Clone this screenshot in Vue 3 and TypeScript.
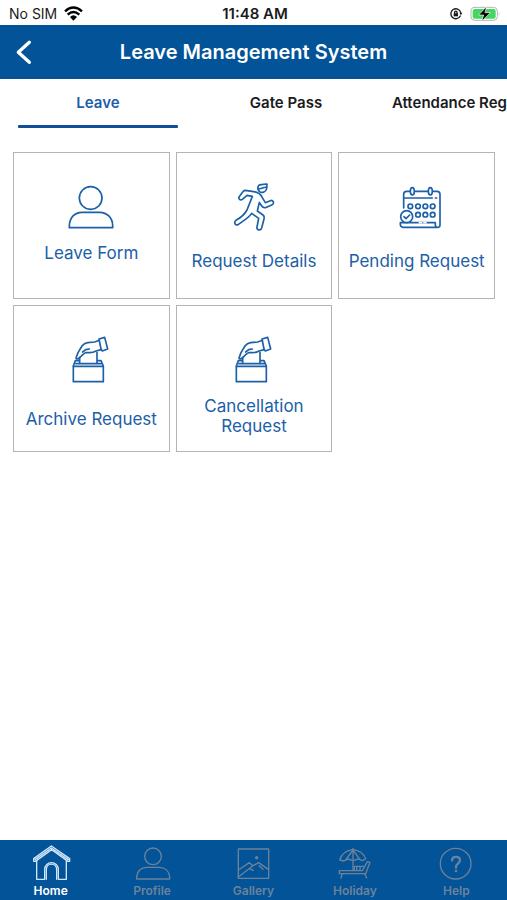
<script setup lang="ts">
import { ref } from 'vue'

type IconName = 'person' | 'runner' | 'calendar' | 'ballot'

interface Tile {
  label: string
  icon: IconName
  spacing: 'close' | 'medium' | 'wide'
}

const tabs: string[] = ['Leave', 'Gate Pass', 'Attendance Reg']
const activeTab = ref(0)

const tiles: Tile[] = [
  { label: 'Leave Form', icon: 'person', spacing: 'close' },
  { label: 'Request Details', icon: 'runner', spacing: 'medium' },
  { label: 'Pending Request', icon: 'calendar', spacing: 'medium' },
  { label: 'Archive Request', icon: 'ballot', spacing: 'wide' },
  { label: 'Cancellation Request', icon: 'ballot', spacing: 'close' },
]

const navItems: string[] = ['Home', 'Profile', 'Gallery', 'Holiday', 'Help']
const activeNav = ref('Home')
</script>

<template>
  <div class="screen">
    <div class="status">
      <div class="carrier">
        <span>No SIM</span>
        <svg class="wifi" viewBox="0 0 57 45" aria-hidden="true">
          <path d="M3 16 Q28 -7 54 16" />
          <path d="M11 26 Q28 10 46 26" />
          <path class="solid" d="M18 33 Q28 23 39 33 L28 44Z" />
        </svg>
      </div>
      <time class="clock">11:48 AM</time>
      <div class="indicators">
        <svg class="lock" viewBox="0 0 42 42" aria-hidden="true">
          <path d="M34 27 A15 15 0 1 1 35 16" />
          <path class="solid" d="M31 17 H40 L36 25Z" />
          <path class="solid" d="M14 19 H27 V28 H14Z" />
          <path d="M17 20 V16 A3 3 0 0 1 24 16 V20" />
        </svg>
        <svg class="battery" viewBox="0 0 93 48" aria-hidden="true">
          <rect class="shell" x="3" y="4" width="79" height="39" rx="11" />
          <rect class="charge" x="8" y="9" width="69" height="29" rx="6" />
          <path class="cap" d="M86 18 Q91 23 86 29Z" />
          <path class="bolt" d="M49 2 L26 27 H41 L35 46 L61 20 H46Z" />
        </svg>
      </div>
    </div>

    <header class="topbar">
      <button class="back" type="button" aria-label="Back">
        <svg viewBox="0 0 72 84" aria-hidden="true"><path d="M52 13 L19 43 L52 73" /></svg>
      </button>
      <h1>Leave Management System</h1>
    </header>

    <nav class="tabs">
      <button
        v-for="(tab, i) in tabs"
        :key="tab"
        type="button"
        class="tab"
        :class="{ active: i === activeTab }"
        @click="activeTab = i"
      >
        {{ tab }}
      </button>
    </nav>

    <main class="tiles">
      <button v-for="tile in tiles" :key="tile.label" type="button" class="tile" :class="tile.spacing">
        <svg v-if="tile.icon === 'person'" class="tile-icon" viewBox="197 111 150 150" aria-hidden="true">
          <circle cx="271" cy="159" r="34" />
          <path d="M207 248 V241 C209 215 224 203 246 202 H298 C320 203 336 217 337 241 V248Z" />
        </svg>
        <svg v-else-if="tile.icon === 'runner'" class="tile-icon" viewBox="177 111 150 150" aria-hidden="true">
          <path d="M264 126 C265 118 272 118 279 118 L291 117 L290 131 C287 143 276 144 269 140 C265 137 263 132 264 126Z" />
          <path d="M266 131 C275 133 280 125 289 127" />
          <path d="M226 136 L251 140 C265 142 273 149 277 158 L286 173 L301 167 C309 164 314 174 307 179 L286 188 C280 189 276 185 273 180 L268 172 L262 198 L279 210 C283 213 283 217 282 222 L275 249 C272 258 259 256 261 246 L266 220 L245 205 C237 218 219 228 204 239 C195 243 191 231 198 226 C216 216 224 208 231 195 L247 154 L231 151 L217 163 C210 168 203 160 209 153 L220 139 Q222 136 226 136Z" />
        </svg>
        <svg v-else-if="tile.icon === 'calendar'" class="tile-icon" viewBox="169 111 150 150" aria-hidden="true">
          <path d="M204 189 V148 Q204 139 213 139 H223 M237 139 H277 M291 139 H304 Q313 139 313 148 V240 Q313 247 306 247 H203 Q194 247 194 238 V233 H299 V239 Q299 247 306 247" />
          <ellipse cx="230" cy="139" rx="6" ry="11" />
          <ellipse cx="284" cy="139" rx="6" ry="11" />
          <path d="M205 159 H290 M299 159 H303" />
          <circle cx="224" cy="184" r="7" />
          <circle cx="247" cy="184" r="7" />
          <circle cx="269" cy="184" r="7" />
          <circle cx="291" cy="184" r="7" />
          <circle cx="247" cy="209" r="7" />
          <circle cx="269" cy="209" r="7" />
          <circle cx="291" cy="209" r="7" />
          <circle class="filled" cx="213" cy="215" r="18" />
          <path d="M205 215 L211 221 L222 210" />
          <path class="gap" d="M251 233 H258 M265 233 H271" />
        </svg>
        <svg v-else class="tile-icon" viewBox="199 105 150 150" aria-hidden="true">
          <path d="M221 199 H311 V245 H221Z" />
          <path d="M221 198 L227 182 H238 M294 182 H304 L311 198 M229 191 H304" />
          <path d="M240 190 V172 M292 190 V157" />
          <path d="M299 121 L285 126 L264 128 C256 129 252 131 247 138 L235 158 L229 174 C230 178 235 177 239 174 L250 163 L258 158 H270 C278 158 284 156 289 153 L304 149" />
          <path d="M249 156 L258 149 L269 147" />
          <path d="M298 117 L315 112 L324 147 L308 153 L304 147Z" />
        </svg>
        <span class="tile-label">{{ tile.label }}</span>
      </button>
    </main>

    <footer class="bottom">
      <a
        v-for="item in navItems"
        :key="item"
        href="#"
        class="nav-item"
        :class="{ active: item === activeNav }"
        @click.prevent="activeNav = item"
      >
        <svg v-if="item === 'Home'" class="nav-icon" viewBox="93 40 120 120" aria-hidden="true">
          <path d="M101 87 L154 49 L209 87 V95 H204 L155 60 L106 95 H101Z" />
          <path d="M105 90 L154 55 L205 90" />
          <path d="M110 93 V149 H134 V120 C134 92 175 92 175 120 V149 H199 V93" />
          <path d="M139 149 V120 C139 98 170 98 170 120 V149" />
        </svg>
        <svg v-else-if="item === 'Profile'" class="nav-icon" viewBox="396 40 120 120" aria-hidden="true">
          <circle cx="459" cy="80" r="25" />
          <path d="M410 148 V142 C412 123 424 114 440 113 H479 C496 114 508 125 509 142 V148Z" />
        </svg>
        <svg v-else-if="item === 'Gallery'" class="nav-icon" viewBox="100 40 120 120" aria-hidden="true">
          <rect x="116" y="58" width="91" height="88" />
          <circle class="dot" cx="171" cy="84" r="5" />
          <path d="M116 121 L149 99 L160 108 M116 142 L160 108 L177 99 L207 120 M149 117 L161 122 M179 108 L190 119" />
        </svg>
        <svg v-else-if="item === 'Holiday'" class="nav-icon" viewBox="405 40 120 120" aria-hidden="true">
          <path d="M419 91 C425 72 440 62 459 60 C478 62 492 73 497 88 L487 93 L475 88 L459 93 L444 88 L432 94Z" />
          <path d="M459 56 V122 M459 61 L437 91 M459 61 L480 90" />
          <path d="M418 123 H487 L502 96 L510 98 L497 132 H418Z" />
          <path d="M427 132 L423 145 M494 132 L500 145 M463 122 V110 H490 M470 110 V121 M480 110 V121" />
        </svg>
        <svg v-else class="nav-icon" viewBox="169 40 120 120" aria-hidden="true">
          <circle cx="228" cy="102" r="46" />
          <path class="heavy" d="M217 92 C218 78 241 79 241 92 C241 101 229 101 229 112 V114" />
          <circle class="dot" cx="229" cy="124" r="4" />
        </svg>
        <span>{{ item }}</span>
      </a>
    </footer>
  </div>
</template>

<style>
body {
  margin: 0;
  background: #fff;
}
</style>

<style scoped>
.screen {
  display: flex;
  flex-direction: column;
  min-height: 100vh;
  overflow: hidden;
  background: #fff;
  color: #1b1b1d;
  font-family: Inter, "Liberation Sans", sans-serif;
}

button {
  margin: 0;
  padding: 0;
  border: 0;
  background: none;
  color: inherit;
  font: inherit;
  cursor: pointer;
}

svg {
  display: block;
  fill: none;
  stroke: currentColor;
  stroke-linecap: round;
  stroke-linejoin: round;
}

.status {
  display: grid;
  grid-template-columns: 1fr auto 1fr;
  align-items: center;
  height: 25px;
  padding: 2px 6px 0 9px;
  box-sizing: border-box;
  font-size: 14px;
  line-height: 20px;
}

.carrier,
.indicators {
  display: flex;
  align-items: center;
  gap: 7px;
}

.indicators {
  justify-content: flex-end;
}

.clock {
  font-size: 15px;
  font-weight: 600;
}

.wifi {
  width: 19px;
  height: 15px;
  color: #000;
  stroke-width: 7;
  stroke-linecap: butt;
}

.solid {
  fill: currentColor;
  stroke: none;
}

.lock {
  width: 14px;
  height: 14px;
  stroke-width: 4;
}

.battery {
  width: 31px;
  height: 16px;
}

.shell {
  stroke: #b5b5b5;
  stroke-width: 3;
}

.charge {
  fill: #43d660;
  stroke: none;
}

.cap {
  fill: #b5b5b5;
  stroke: none;
}

.bolt {
  fill: #000;
  stroke: #fff;
  stroke-width: 2;
}

.topbar {
  display: grid;
  grid-template-columns: 48px 1fr 48px;
  align-items: center;
  height: 54px;
  background: #025398;
  color: #fff;
}

.back {
  display: flex;
  align-items: center;
  justify-content: center;
  height: 54px;
}

.back svg {
  width: 24px;
  height: 28px;
  stroke-width: 10;
}

h1 {
  margin: 0;
  font-size: 20px;
  font-weight: 600;
  line-height: 28px;
  text-align: center;
  white-space: nowrap;
}

.tabs {
  display: flex;
  padding-left: 4px;
  overflow: hidden;
}

.tab {
  display: flex;
  flex: 0 0 188px;
  flex-direction: column;
  align-items: center;
  height: 49px;
  padding: 14px 12px 0;
  box-sizing: border-box;
  font-size: 15px;
  font-weight: 600;
  line-height: 20px;
  white-space: nowrap;
}

.tab:last-child {
  align-items: flex-start;
}

.tab.active {
  color: #1c60a8;
}

.tab.active::after {
  content: "";
  width: 160px;
  height: 3px;
  margin-top: 12px;
  border-radius: 1px;
  background: #10509b;
}

.tiles {
  display: grid;
  grid-template-columns: repeat(3, 1fr);
  align-content: start;
  gap: 6px;
  flex: 1;
  padding: 24px 12px 24px 13px;
}

.tile {
  display: flex;
  flex-direction: column;
  align-items: center;
  justify-content: flex-start;
  height: 147px;
  padding-top: 29px;
  box-sizing: border-box;
  border: 1px solid #b4b4b4;
  color: #1c60a8;
  font-size: 17px;
  line-height: 20px;
}

.close {
  gap: 11px;
}

.medium {
  gap: 19px;
}

.wide {
  gap: 24px;
}

.tile-icon {
  flex: none;
  width: 50px;
  height: 50px;
  stroke-width: 5;
}

.filled {
  fill: #fff;
}

.gap {
  stroke: #fff;
}

.tile-label {
  max-width: 140px;
}

.bottom {
  display: grid;
  grid-template-columns: repeat(5, 1fr);
  height: 60px;
  background: #025398;
}

.nav-item {
  display: flex;
  flex-direction: column;
  align-items: center;
  padding-top: 3px;
  color: #6b829a;
  font-size: 12px;
  font-weight: 600;
  line-height: 16px;
  text-decoration: none;
}

.nav-item.active {
  color: #fff;
}

.nav-icon {
  width: 40px;
  height: 40px;
  stroke-width: 4;
}

.active .nav-icon {
  color: #d2e6fb;
}

.heavy {
  stroke-width: 7;
}

.dot {
  fill: currentColor;
  stroke: none;
}
</style>
